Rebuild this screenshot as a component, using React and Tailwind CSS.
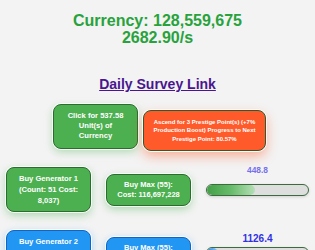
import React from "react";

const font = { fontFamily: '"Liberation Sans", Arial, sans-serif' };

function GenRow({ color, gen, max, label, labelClass, fill, fillClass, barMb }) {
  const btn =
    color === "green"
      ? "bg-[#4caf50] border-[#2e6b31] shadow-[0_0_0_1px_rgba(255,255,255,0.8),0_3px_8px_rgba(76,175,80,0.45)]"
      : "bg-[#2196f3] border-[#1565c0] shadow-[0_0_0_1px_rgba(255,255,255,0.8),0_3px_8px_rgba(33,150,243,0.45)]";
  return (
    <div className="flex items-center gap-[15px] px-[6px]">
      <div
        className={`w-[85px] shrink-0 rounded-[8px] border px-[9px] py-[5px] text-center text-[7.6px] font-bold leading-[11px] text-white ${btn}`}
      >
        {gen}
      </div>
      <div
        className={`w-[85px] shrink-0 rounded-[8px] border px-[9px] py-[5px] text-center text-[7.5px] font-bold leading-[10px] text-white ${btn}`}
      >
        {max}
      </div>
      <div className="relative flex-1">
        <div
          className={`absolute bottom-full left-0 right-0 text-center font-bold ${labelClass}`}
          style={{ marginBottom: barMb }}
        >
          {label}
        </div>
        <div className="h-[12px] overflow-hidden rounded-full border border-[#3d6b3f] bg-[#dedede] shadow-[0_1px_3px_rgba(0,0,0,0.15)]">
          <div className={`h-full rounded-full ${fillClass}`} style={{ width: fill }} />
        </div>
      </div>
    </div>
  );
}

export default function App() {
  return (
    <div className="min-h-screen bg-[#f3f3f3]" style={font}>
      <div className="pt-[12px] text-center text-[16px] font-bold leading-[17px] text-[#28a23c]">
        <div>Currency: 128,559,675</div>
        <div>2682.90/s</div>
      </div>
      <div className="mt-[30px] text-center text-[14px] font-bold leading-[16px]">
        <a href="#" className="text-[#4a1690] underline">
          Daily Survey Link
        </a>
      </div>
      <div className="mt-[12px] flex items-start justify-center gap-[5px] pl-[4px]">
        <div className="w-[85px] shrink-0 rounded-[8px] border border-[#2e6b31] bg-[#4caf50] px-[9px] py-[6px] text-center text-[7.6px] font-bold leading-[10.2px] text-white shadow-[0_0_0_1px_rgba(255,255,255,0.8),0_3px_8px_rgba(76,175,80,0.4)]">
          Click for 537.58 Unit(s) of Currency
        </div>
        <div className="mt-[6px] w-[123px] shrink-0 rounded-[8px] border border-[#2f5a2f] bg-[#ff5a2a] px-[8px] py-[6.5px] text-center text-[6px] font-bold leading-[8.7px] text-white shadow-[0_0_0_1px_rgba(255,255,255,0.8),0_5px_12px_rgba(255,87,34,0.45)]">
          Ascend for 3 Prestige Point(s) (+7% Production Boost) Progress to Next Prestige Point: 80.57%
        </div>
      </div>
      <div className="mt-[16px] flex flex-col gap-[18px]">
        <GenRow
          color="green"
          gen="Buy Generator 1 (Count: 51 Cost: 8,037)"
          max="Buy Max (55): Cost: 116,697,228"
          label="448.8"
          labelClass="text-[8.4px] leading-[10px] text-[#7470ee]"
          barMb="9px"
          fill="47.5%"
          fillClass="bg-gradient-to-r from-[#43a047] via-[#66bb6a] to-[#b5dfb7]"
        />
        <GenRow
          color="blue"
          gen="Buy Generator 2 (Count: 30 Cost: 1,206,523)"
          max="Buy Max (55): Cost: 98,441,307"
          label="1126.4"
          labelClass="text-[10px] leading-[12px] text-[#3131e2]"
          barMb="1.5px"
          fill="11%"
          fillClass="bg-gradient-to-r from-[#1e88e5] to-[#90caf9]"
        />
      </div>
    </div>
  );
}
